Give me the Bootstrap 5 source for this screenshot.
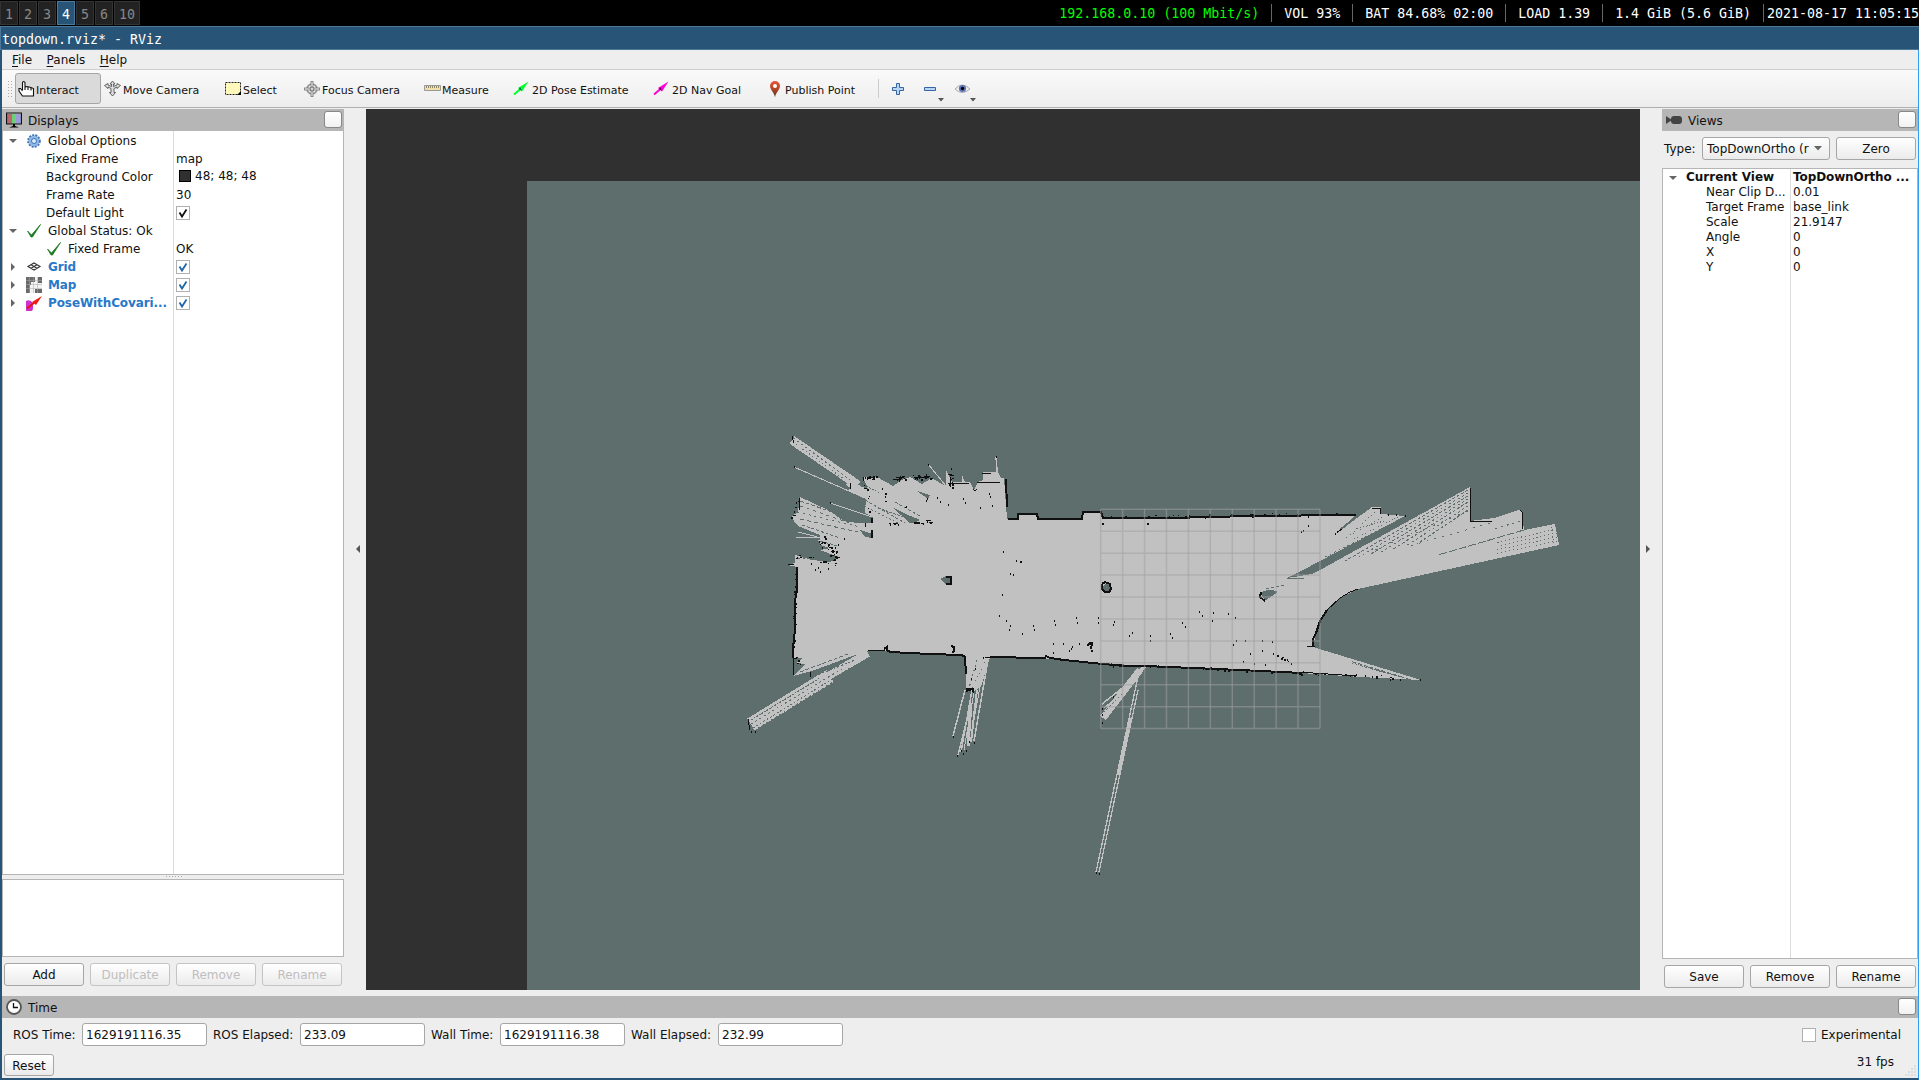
<!DOCTYPE html>
<html lang="en">
<head>
<meta charset="utf-8">
<title>topdown.rviz* - RViz</title>
<link href="https://cdn.jsdelivr.net/npm/bootstrap@5.3.0/dist/css/bootstrap.min.css" rel="stylesheet">
<style>
body{width:1919px;height:1080px;overflow:hidden;background:#eee;color:#111;font:12px/18px "DejaVu Sans",sans-serif}
svg{display:block;flex:none}
.mono{font-family:"DejaVu Sans Mono",monospace;font-size:13.29px}
.wsbar{height:26px;background:#000;color:#fff;line-height:28px}
.wsbtn{height:24px;width:18px;margin:1px 1px 0 0;border:1px solid #333;background:#222;color:#888;text-align:center;line-height:25px}
.wsbtn.cur{background:#285577;border-color:#4c7899;color:#fff}
.stat{padding:0 12px 0 13px;position:relative;white-space:pre}
.stat+.stat::before{content:"";position:absolute;left:0;top:4px;height:18px;width:1px;background:#666}
.titlebar{height:24px;background:#285577;border:1px solid #4c7899;border-right:0;color:#fff;line-height:25px;padding-left:1px}
.win{height:1030px;border-left:2px solid #285577;border-bottom:2px solid #285577;border-right:1px solid #2e9ef4}
.menus{height:20px;border-bottom:1px solid #cfcfcf;padding-left:10px;line-height:21px}
.menus span{margin-right:14.500px}
.menus u{text-underline-offset:2px}
.tools{height:38px;background:linear-gradient(#fafafa,#ededed);border-bottom:1px solid #b0b0b0;padding-left:5px;font-size:11px}
.grip{width:5px;height:17px;margin-right:3px;margin-left:0;background-image:radial-gradient(circle,#aaa 0.6px,transparent .9px);background-size:3px 3px}
.tool{height:31px;display:flex;align-items:center;gap:1px;padding-left:2px;white-space:nowrap;border:1px solid transparent;border-radius:3px}
.tool.on{background:#dadada;border-color:#a6a6a6}
.tool span{position:relative;top:2px}
.dockhead{height:22px;background:#b6b6b6;padding:0 2px 0 4px;line-height:22px}
.dockhead span{padding-top:2px;margin-left:6px}
.floatbtn{width:18px;height:17px;border:1px solid #888;border-radius:3px;background:linear-gradient(#fff,#f1f1f1);margin-left:auto;margin-top:-1px}
.left{width:342px}.gut{width:22px}.right{width:256px}
.gut svg{margin-top:-7px}
.tree{background:#fff;border:1px solid #b5b5b5}
.trow{height:18px;display:flex}
.trow .nm{width:171px;position:relative;white-space:nowrap;display:flex;align-items:center}
.trow .vl{padding-left:2px;display:flex;align-items:center}
.tree.disp{height:744px;background:linear-gradient(#dcdcdc,#dcdcdc) 170px 0/1px 100% no-repeat #fff;border-top:0;padding-top:1px}
.disp .trow{line-height:19px}
.tree.view{height:791px;background:linear-gradient(#dcdcdc,#dcdcdc) 127px 0/1px 100% no-repeat #fff;padding-top:1px}
.view .trow{height:15px;line-height:15px}.view .nm{width:128px}
.arr{width:10px;margin-left:5px;margin-right:13px}
.ic{width:16px;margin-right:6px}
.ind{padding-left:43px}
.blue{color:#2878c8;font-weight:bold;letter-spacing:-.1px}
.cb{width:14px;height:14px;border:1px solid #b0b0b0;background:#fff}
.desc{height:78px;background:#fff;border:1px solid #b5b5b5}
.qbtn{width:80px;height:23px;border:1px solid #a6a6a6;border-radius:3px;background:linear-gradient(#fff,#ebebeb);text-align:center;line-height:22px;color:#111;padding:0;font-size:12px}
.qbtn.off{color:#bebebe;border-color:#c4c4c4}
.combo{width:128px;text-align:left;padding:0 7px 0 4px;display:flex;align-items:center;justify-content:space-between}
.edit{width:125px;height:23px;border:1px solid #a6a6a6;border-radius:3px;background:#fff;padding-left:3px;line-height:22px}
.lbl{text-align:left;white-space:nowrap}
</style>
<script src="https://cdn.jsdelivr.net/npm/bootstrap@5.3.0/dist/js/bootstrap.bundle.min.js"></script>
</head>
<body>
<svg width="0" height="0" class="position-absolute"><defs>
<symbol id="open" viewBox="0 0 10 10"><path d="M1 3H9L5 7Z" fill="#666"/></symbol>
<symbol id="shut" viewBox="0 0 10 10"><path d="M3 1V9L7 5Z" fill="#666"/></symbol>
<symbol id="ok" viewBox="0 0 16 16"><path d="M1.500 8L5.500 12L14.500 1.500L6.500 14H5Z" fill="#1c7a22" stroke="#1c7a22" stroke-width=".8"/></symbol>
<symbol id="tick" viewBox="0 0 12 12"><path d="M2.500 5.500L5 9.500L9.500 2.500" fill="none" stroke="currentColor" stroke-width="1.800"/></symbol>
</defs></svg>

<div class="wsbar mono d-flex">
 <div class="wsbtn">1</div><div class="wsbtn">2</div><div class="wsbtn">3</div><div class="wsbtn cur">4</div><div class="wsbtn">5</div><div class="wsbtn">6</div><div class="wsbtn" style="width:26px">10</div>
 <div class="ms-auto d-flex"><span class="stat" style="color:#0f0">192.168.0.10 (100 Mbit/s)</span><span class="stat">VOL 93%</span><span class="stat">BAT 84.68% 02:00</span><span class="stat">LOAD 1.39</span><span class="stat">1.4 GiB (5.6 GiB)</span><span class="stat ps-1 pe-0">2021-08-17 11:05:15</span></div>
</div>
<div class="titlebar mono">topdown.rviz* - RViz</div>

<div class="win">
 <div class="menus"><span><u>F</u>ile</span><span><u>P</u>anels</span><span><u>H</u>elp</span></div>
 <div class="tools d-flex align-items-center">
  <div class="grip"></div>
  <div class="tool on" style="width:86px"><svg width="17" height="18" viewBox="0 0 17 18"><path d="M4.500 10V2.500Q5.500 .5 7 2.500V7L9 6.500L11 7L13 7.500L15.500 8.500V16H4.500L1 11V8.500L2.500 8.500L4.500 11M7 7V10M10 7V10M13 8V10.500" fill="#fff" stroke="#111" stroke-width="1.100"/></svg><span>Interact</span></div>
  <div class="tool" style="width:121px;gap:2px"><svg width="17" height="17" viewBox="0 0 17 17"><path d="M8.500 1L11 4H9.500V6.500L13 5V3.500L16.500 5.500L13 8.500V7L10 8.500V12.500H11.500L8.500 16L5.500 12.500H7V8.500L4 7V8.500L.5 5.500L4 3.500V5L7.500 6.500V4H6Z" fill="#ddd" stroke="#555" stroke-width=".9"/></svg><span>Move Camera</span></div>
  <div class="tool" style="width:78px"><svg width="17" height="17" viewBox="0 0 17 17"><rect x=".5" y="2.500" width="15" height="12" fill="#fff8bb" stroke="#222" stroke-dasharray="2 1"/><path d="M16 11v4h-4z"/></svg><span>Select</span></div>
  <div class="tool" style="width:121px"><svg width="18" height="18" viewBox="0 0 18 18"><circle cx="9" cy="9" r="5" fill="#eee" stroke="#888" stroke-width="1.500"/><path d="M9 1v16M1 9h16" stroke="#888" stroke-width="3"/><path d="M9 2v14M2 9h14" stroke="#eee"/><circle cx="9" cy="9" r="2" fill="none" stroke="#777"/></svg><span>Focus Camera</span></div>
  <div class="tool" style="width:89px"><svg width="17" height="17" viewBox="0 0 17 17"><path d="M.5 5.500H16.500V10.500H.5Z" fill="#eee0a8" stroke="#999"/><path d="M2.500 6v2M4.500 6v2M6.500 6v2M8.500 6v2M10.500 6v2M12.500 6v2M14.500 6v2" stroke="#77725a" stroke-width=".8"/></svg><span>Measure</span></div>
  <div class="tool" style="width:135px;gap:2px"><svg width="17" height="17" viewBox="0 0 17 17"><path d="M1 14.500L8 8.500" stroke="#00ff2a" stroke-width="2"/><path d="M5 8L15.500 1.500L9 11.500Z" fill="#00ff2a"/><path d="M7 7l2 4-3-2" fill="#064"/></svg><span>2D Pose Estimate</span></div>
  <div class="tool" style="width:115px;margin-left:5px;gap:2px"><svg width="17" height="17" viewBox="0 0 17 17"><path d="M1 14.500L8 8.500" stroke="#ff00d4" stroke-width="2"/><path d="M5 8L15.500 1.500L9 11.500Z" fill="#ff00d4"/><path d="M7 7l2 4-3-2" fill="#606"/></svg><span>2D Nav Goal</span></div>
  <div class="tool" style="width:113px"><svg width="16" height="18" viewBox="0 0 16 18"><defs><linearGradient id="pin" x2="0" y2="1"><stop stop-color="#ec5538"/><stop offset=".5" stop-color="#b04526"/><stop offset="1" stop-color="#4c3418"/></linearGradient></defs><path d="M7 17.500C6.500 13 2 9.500 2 6A5 5 0 0 1 12 6C12 9.500 7.500 13 7 17.500Z" fill="url(#pin)"/><circle cx="7" cy="6" r="2" fill="#fff"/></svg><span>Publish Point</span></div>
  <div style="width:1px;height:19px;background:#ccc"></div>
  <svg class="ms-2" width="110" height="30" viewBox="0 0 110 30"><path d="M9.500 9.500h3v4h4v3h-4v4h-3v-4h-4v-3h4z" fill="#b8d6f4" stroke="#3465a4"/><path d="M37.500 13.500h11v3h-11z" fill="#b8d6f4" stroke="#3465a4"/><path d="M51 24h6l-3 3.500zM83 24h6l-3 3.500z" fill="#555"/><path d="M68 15q7-8 15 0q-8 7-15 0z" fill="#eee" stroke="#aaa"/><circle cx="75.500" cy="14.500" r="3.600" fill="#5b74bb"/><circle cx="75.500" cy="14.500" r="1.700"/></svg>
 </div>

 <div class="d-flex" style="padding-top:1px;height:888px">
  <div class="left d-flex flex-column">
   <div class="dockhead d-flex align-items-center"><svg width="16" height="16" viewBox="0 0 16 16"><path d="M1 2h5v10H1z" fill="#b66a70"/><path d="M6 2h4v10H6z" fill="#6fd07a"/><path d="M10 2h5v10h-5z" fill="#9c9cd8"/><path d="M.5 1h15v11H.5z" fill="none" stroke="#111" stroke-width="1.200"/><path d="M7 12h2v2l4 1.500H3L7 14z"/></svg><span>Displays</span><i class="floatbtn"></i></div>
   <div class="tree disp">
    <div class="trow"><div class="nm"><svg class="arr" height="10"><use href="#open"/></svg><svg class="ic" height="16" viewBox="0 0 16 16" style="margin-left:-5px"><circle cx="8" cy="8" r="5.800" fill="#9ec1e8" stroke="#3f74b5" stroke-width="2" stroke-dasharray="2 1.100"/><circle cx="8" cy="8" r="5" fill="#8fb8e6"/><circle cx="8" cy="8" r="2.500" fill="#dceafa" stroke="#3f74b5"/></svg>Global Options</div></div>
    <div class="trow"><div class="nm ind">Fixed Frame</div><div class="vl">map</div></div>
    <div class="trow"><div class="nm ind">Background Color</div><div class="vl" style="margin-top:-2px"><i style="width:12px;height:12px;background:#303030;border:1px solid #000;margin:0 4px 0 3px"></i>48; 48; 48</div></div>
    <div class="trow"><div class="nm ind">Frame Rate</div><div class="vl">30</div></div>
    <div class="trow"><div class="nm ind">Default Light</div><div class="vl"><svg class="cb"><use href="#tick"/></svg></div></div>
    <div class="trow"><div class="nm"><svg class="arr" height="10"><use href="#open"/></svg><svg class="ic" height="16" style="margin-left:-5px"><use href="#ok"/></svg>Global Status: Ok</div></div>
    <div class="trow"><div class="nm ind"><svg class="ic" height="16"><use href="#ok"/></svg>Fixed Frame</div><div class="vl">OK</div></div>
    <div class="trow"><div class="nm"><svg class="arr" height="10"><use href="#shut"/></svg><svg class="ic" height="16" viewBox="0 0 16 16" style="margin-left:-5px"><path d="M2 7.500L8 4L14 7.500L8 11ZM5 5.700L11 9.300M11 5.700L5 9.300" fill="none" stroke="#333" stroke-width="1.100"/></svg><span class="blue">Grid</span></div><div class="vl" style="color:#1f66a8"><svg class="cb"><use href="#tick"/></svg></div></div>
    <div class="trow"><div class="nm"><svg class="arr" height="10"><use href="#shut"/></svg><svg class="ic" height="16" viewBox="0 0 16 16" style="margin-left:-5px"><path d="M0 0h16v16H0z" fill="#f2f2f2"/><path d="M0 0h9v5H5v3H4v8H0zM12 0h4v6h-4zM9 12h7v4H9z" fill="#6a6a6a"/><path d="M3.500 0v16M7.500 0v16M11.500 0v16M0 3.500h16M0 7.500h16M0 11.500h16" stroke="#aaa" stroke-width=".5"/></svg><span class="blue">Map</span></div><div class="vl" style="color:#1f66a8"><svg class="cb"><use href="#tick"/></svg></div></div>
    <div class="trow"><div class="nm"><svg class="arr" height="10"><use href="#shut"/></svg><svg class="ic" height="16" viewBox="0 0 16 16" style="margin-left:-5px"><path d="M0 6q4-2 7 2v6l-1 2H0z" fill="#cc33cc"/><path d="M1 13.500L9 7" stroke="#e81414" stroke-width="2"/><path d="M6 7L16 1L10 10z" fill="#f01c14"/></svg><span class="blue">PoseWithCovari...</span></div><div class="vl" style="color:#1f66a8"><svg class="cb"><use href="#tick"/></svg></div></div>
   </div>
   <svg width="342" height="4"><path d="M164 1.500h17" stroke="#aaa" stroke-dasharray="1 2"/></svg>
   <div class="desc"></div>
   <div class="d-flex" style="gap:6px;padding:6px 0 0 2px"><div class="qbtn">Add</div><div class="qbtn off">Duplicate</div><div class="qbtn off">Remove</div><div class="qbtn off">Rename</div></div>
  </div>
  <div class="gut d-flex align-items-center"><svg width="22" height="10"><path d="M16 1v8l-4-4z" fill="#555"/></svg></div>

  <svg id="scene" width="1274" height="881" viewBox="366 109 1274 881" shape-rendering="crispEdges">
   <path d="M366 109h1274v881H366z" fill="#303030"/><path d="M527 180.500h1113v809.500H527z" fill="#5e6e6c"/>
   <path fill="#c1c1c1" d="M797 567L794 658H803L796 663L806 664L793 676L812 671L866 651H885L890 652L963 655L966 659V690L974 691L981 687L990 657L1064 659L1103 663L1145 666L1240 670L1300 673L1360 677L1421 680L1372 665L1313 647L1316 633L1320 621L1327 610L1340 598L1358 589L1559 545L1555 524L1524 530L1522 512L1519 510L1494 518L1470 521V487L1320 570L1312 574L1300 576L1287 578L1301 571L1405 516L1381 514V507H1372L1338 532L1355 516H1340L1170 518L1102 518V512H1083V519H1038L1037 514H1018V519H1007L1004 478H1001L998 472H983V480L978 482L974 490L970 482H965L962 475V482H952L946 470V486L942 484L932 478L922 484L910 477L902 480L893 486L877 477H863L868 489L850 483V488L866 498L865 513L873 517L872 523H857L844 521L828 510L800 497L798 512L791 517L798 526L820 535V545L830 548L820 550L839 557L830 562L812 560L795 555V563L788 565Z"/>
   <g id="rays"></g>
   <path fill="#5e6e6c" d="M940 579l6-3h6v8h-7zM1102 587l3-3h5v6l-6 2zM1261 592q10-4 17 0l-12 8-4-3zM860 530l12 4v4l-7-1zM892 507l18 9 9 7h-9zM911 516l9 4-5 2zM917 491l13 4-2 4z"/>
   <path fill="none" stroke="#101010" stroke-width="2" d="M797 567V590L795 601V630L793 648V658M884 649l3-2v3l3 2 40 2 32 1 3 2 1 17M990 657l50 1h5l1-2 4 2 14 2 39 4 22 2h20l24 1 71 3 62 3M1008 519h10v-5h19l1 5h44l1-7h18l2 6h67l80-2 106-1M1313 647V639L1316 633L1320 621L1327 610M1006 479l1 28M946 577h5v7h-5M1102 584l3-2 5 2 1 5-2 3h-4l-3-3v-5M1261 592l-1 5 5 4M966 689h8M951 646l3 1v4l-2 2M872 530v8M872 518v5M914 523h6M1087 645l5-2-1 6"/>
   <path fill="none" stroke="#101010" d="M1299 672l57 4M1327 610L1340 598L1350 592L1358 589M868 650h17M948 483h21M977 482h23M793 658h4M863 477v4M867 477h8M894 479h5M898 477h6M914 477h7M923 478l7-2M950 477v10M973 489l2 2 2-2M982 474v-1h9M1470 488V521h6M1476 521h16M1520 510l2 2 1 17M865 523v4M893 523l5 1M926 521l4-1M839 557l-6 4M820 545l4-3M788 564h6M793 659v16M810 672v5M792 436l2 7M748 719l2 11M1372 508h8v6M1338 532l4-3M1307 646h8M985 657h5M800 498l-1 12M793 516l3-1M851 483l-1 6"/>
   <g id="specks" fill="#101010"></g>
   <g id="cells" stroke="#a0a0a4" stroke-opacity=".5" stroke-width="1.500" shape-rendering="auto"></g>
  </svg>

  <div class="gut d-flex align-items-center"><svg width="22" height="10"><path d="M6 1v8l4-4z" fill="#555"/></svg></div>
  <div class="right d-flex flex-column">
   <div class="dockhead d-flex align-items-center"><svg width="16" height="10" viewBox="0 0 16 10"><rect x="5" y="1" width="11" height="8" rx="3" fill="#444"/><path d="M0 1l6 4-6 4z" fill="#444"/></svg><span>Views</span><i class="floatbtn"></i></div>
   <div class="d-flex align-items-center" style="padding:6px 0 8px 2px"><span style="width:38px">Type:</span><div class="qbtn combo">TopDownOrtho (r <svg width="8" height="5"><path d="M0 0h8L4 4.500z" fill="#666"/></svg></div><div class="qbtn" style="margin-left:6px">Zero</div></div>
   <div class="tree view">
    <div class="trow fw-bold"><div class="nm"><svg class="arr" height="10" style="margin-right:8px"><use href="#open"/></svg>Current View</div><div class="vl" style="letter-spacing:-.1px">TopDownOrtho ...</div></div>
    <div class="trow"><div class="nm ind">Near Clip D...</div><div class="vl">0.01</div></div>
    <div class="trow"><div class="nm ind">Target Frame</div><div class="vl">base_link</div></div>
    <div class="trow"><div class="nm ind">Scale</div><div class="vl">21.9147</div></div>
    <div class="trow"><div class="nm ind">Angle</div><div class="vl">0</div></div>
    <div class="trow"><div class="nm ind">X</div><div class="vl">0</div></div>
    <div class="trow"><div class="nm ind">Y</div><div class="vl">0</div></div>
   </div>
   <div class="d-flex" style="gap:6px;padding:6px 0 0 2px"><div class="qbtn">Save</div><div class="qbtn">Remove</div><div class="qbtn">Rename</div></div>
  </div>
 </div>

 <div class="dockhead d-flex align-items-center"><svg width="16" height="16" viewBox="0 0 16 16"><circle cx="8" cy="8" r="7" fill="#fff" stroke="#555" stroke-width="1.800"/><path d="M7.500 4v4.500H12" fill="none" stroke="#111" stroke-width="1.300"/></svg><span>Time</span><i class="floatbtn"></i></div>
 <div class="d-flex align-items-center" style="padding:5px 17px 0 11px">
  <span class="lbl" style="width:69px">ROS Time:</span><div class="edit">1629191116.35</div>
  <span class="lbl" style="width:93px;padding-left:6px">ROS Elapsed:</span><div class="edit">233.09</div>
  <span class="lbl" style="width:75px;padding-left:6px">Wall Time:</span><div class="edit">1629191116.38</div>
  <span class="lbl" style="width:93px;padding-left:6px">Wall Elapsed:</span><div class="edit">232.99</div>
  <i class="cb ms-auto"></i><span style="margin-left:5px">Experimental</span>
 </div>
 <div class="d-flex" style="padding:8px 0 0 2px"><div class="qbtn" style="width:50px;height:22px">Reset</div><span class="ms-auto" style="margin-top:-1px;padding-right:11px">31 fps</span><svg width="13" height="24"><path d="M9.500 12h1M6.500 15h4M3.500 18h8M.5 21h11" stroke="#aaa" stroke-dasharray="1 2"/></svg></div>
</div>

<script>
const NS='http://www.w3.org/2000/svg';
const $=id=>document.getElementById(id);
function add(g,tag,attrs){const e=document.createElementNS(NS,tag);for(const k in attrs)e.setAttribute(k,attrs[k]);$(g).appendChild(e)}
// Grid display: 10 x 10 cells
for(let i=0;i<=10;i++){const p=i*21.93;
 add('cells','path',{d:`M${1100.7+p} 509.300v219.300M1100.700 ${509.3+p}h219.300`})}
// One laser ray: color, from, to, width, optional dash
const L='#c1c1c1',T='#5e6e6c';
function ray(c,x1,y1,x2,y2,w=1,dash=''){add('rays','path',{d:`M${x1} ${y1}L${x2} ${y2}`,stroke:c,'stroke-width':w,'stroke-dasharray':dash,fill:'none'})}
[
 // upper left
 [L,792,440,858,485,9],[T,793,438,850,480,1,'2 3'],[T,793,442,848,482,1,'1 3'],
 [L,848,482,905,520,7],[L,794,467,890,509],[L,830,503,872,517],[L,850,488,900,514,5],
 [T,865,500,905,523,1,'3 2'],[T,864,506,900,524,1,'2 2'],[T,878,508,912,520,1,'3 1'],[T,864,485,880,493,1,'2 1'],[T,895,502,920,516,1,'3 2'],
 [T,800,501,835,513,1,'4 2'],[T,800,506,850,523,1,'3 4'],[T,797,512,860,527,1,'2 4'],[T,800,519,862,533,1,'4 3'],[T,802,525,840,538,1,'3 2'],
 [L,798,532,833,541],[L,796,537,820,538],[L,818,540,838,546],[T,820,541,838,546,1,'3 2'],[T,798,558,828,560,1,'2 3'],
 [L,928,464,946,486],[L,996,457,998,484,1.5],[T,952,474,958,482,1,'1 1'],
 // lower left
 [L,751,724.5,830,676,14],[L,820,681,868,653,8],
 [T,751,720,820,678,1,'2 1'],[T,751,724,845,667,1,'2 3'],[T,753,728,850,668,1,'2 2'],[T,758,728,838,679,1,'2 3'],[T,800,672,848,654,1,'4 2'],[T,810,673,850,658,2,'8 2'],[T,815,676,855,660,1,'2 2'],
 // bottom doorway
 [L,965,690,953,736,1.5],[L,972,690,961,752,1.5],[L,974,692,964,750],[L,971,703,968,746,3],[L,977,690,971,742,2],[L,988,660,974,741,1.5],[L,980,687,972,730],[L,969,712,958,755,1.5],
 [T,977,660,969,688,1,'2 3'],[T,985,662,972,688,1,'1 3'],
 // lower middle
 [L,1140,670,1103,718,7],[L,1145,666,1128,684,4],[L,1130,682,1102,704,1.5],[L,1128,688,1104,708],[T,1122,694,1103,713,1,'2 2'],
 [L,1139,672,1096,872,1.3],[L,1138,690,1099,872,1.3],[L,1130,718,1118,775,3],
 // right fan
 ...[0,3,6,9,12,16,20].map((d,i)=>[T,1468,490+d,1345+i*12,561+d*.35-i*4,1,i%2?'2 3':'3 2']),
 [T,1468,511,1370,552,1,'2 7'],[T,1490,523,1410,546,1,'2 6'],[T,1524,530,1438,555,1,'8 2'],[T,1520,521,1495,529,1,'2 4'],
 ...[0,4,8,12].map(d=>[T,1557,529+d,1495,543+d*.9,1,'1 3']),
 [T,1551,527,1554,545,1,'1 2'],
 [T,1398,517,1352,540,1,'1 2'],[T,1382,517,1345,538,1,'1 3'],[T,1375,512,1350,535,1,'1 3'],[T,1384,521,1360,528,1,'1 2'],
 [T,1403,518,1325,557,1,'2 3'],[T,1356,517,1340,530,2],
 [T,1402,677,1350,661,1,'4 2'],[T,1408,679,1358,665,1,'2 2'],[T,1390,674,1352,663,1,'1 1'],
 [T,1266,589,1284,585,1,'3 2'],[T,1287,578,1304,579]
].forEach(r=>ray(...r));
// Isolated occupied cells
[[1003,551],[1016,560],[1020,561],[1010,573],[1013,574],[1002,594],[999,615],[1006,620],[1010,625],[1009,629],[1022,633],[1033,625],[1034,629],[1021,561],[844,538],[937,497],[948,504],[940,501],[963,498],[965,502],[980,507],[989,493],[990,496],[992,505],[906,506],[927,498],[926,500],[951,468],[996,456],[928,464],[818,567],[815,569],[811,563],[820,571],[828,568],
[1054,620],[1055,624],[1076,617],[1077,622],[1098,617],[1098,622],[1114,621],[1113,624],[1129,635],[1132,632],[1150,635],[1150,640],[1170,633],[1172,637],[1182,622],[1185,626],[1199,611],[1202,615],[1213,612],[1212,620],[1228,613],[1235,617],[1236,640],[1233,644],[1245,640],[1250,653],[1262,640],[1262,650],[1272,641],[1273,653],[1254,663],[1265,664],[1281,658],[1291,663],[1243,661],[1053,643],[1053,652],[1063,643],[1071,648],[1072,646],[1069,650],[1079,643],[1102,523,2],[1147,523,2],[1301,531],[1303,530],[1308,525],[1337,531],[1335,533],[794,466],[830,502],[953,736],[957,755],[961,750],[963,753],[966,750],[969,741],[974,742],[1096,872],[1099,873],[1102,708],[1102,714],[1102,722],[1113,696],[751,731],[755,731],[819,541],[822,547],[835,547],[838,544],[983,657],[975,668],[971,678],[1405,515],[1396,514],[1388,514],[1420,679],[1390,679],[1400,679]].forEach(([x,y,s])=>add('specks','rect',{x,y,width:s||1,height:s||2}));
// Ragged texture along the walls
let seed=7;const rnd=()=>(seed=seed*16807%2147483647)/2147483647;
function rough(x1,y1,x2,y2,n,s){for(let i=0;i<n;i++){const t=rnd();add('specks','rect',{x:Math.round(x1+(x2-x1)*t+(rnd()-.5)*s),y:Math.round(y1+(y2-y1)*t+(rnd()-.5)*s),width:1+Math.round(rnd()*1.2),height:1+Math.round(rnd()*.8)})}}
rough(863,478,876,477,12,4);rough(893,480,904,477,14,4);rough(914,477,931,476,18,4);rough(866,485,868,512,8,5);rough(822,536,836,556,22,8);rough(796,556,835,563,14,5);rough(950,472,950,488,10,5);rough(797,658,800,666,6,5);rough(1103,517,1340,514,40,3);rough(1103,664,1400,677,50,3);rough(966,688,973,690,8,3);rough(890,523,898,523,6,3);rough(914,523,930,521,8,3);rough(1088,643,1092,650,6,3);rough(1277,655,1294,664,8,3);rough(795,570,793,656,24,2);rough(798,500,792,517,6,3);rough(880,490,900,510,5,10);
</script>
</body>
</html>
